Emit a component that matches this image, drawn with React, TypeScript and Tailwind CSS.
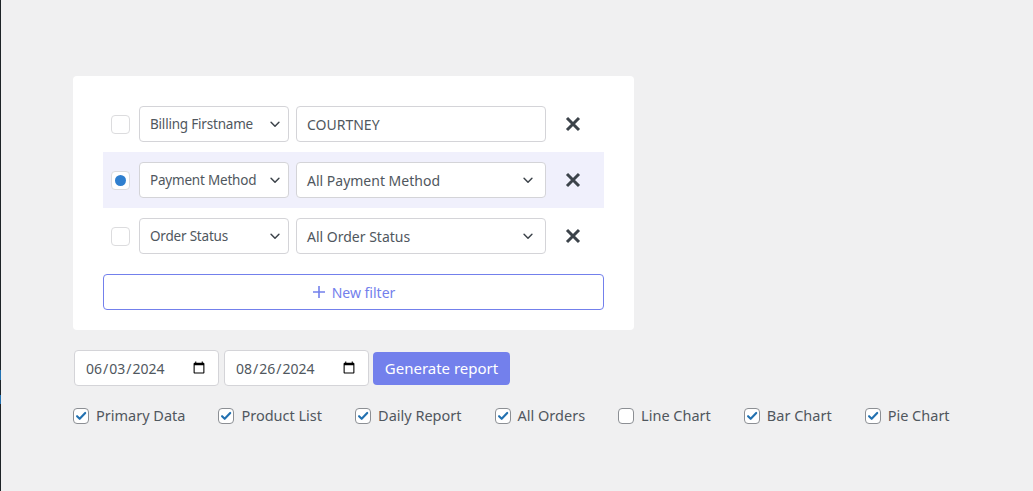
import { useState } from "react";

const FONT = { fontFamily: '"Noto Sans", "Open Sans", sans-serif' };

type Row = {
  field: string;
  value: string;
  kind: "text" | "select";
};

const ROWS: Row[] = [
  { field: "Billing Firstname", value: "COURTNEY", kind: "text" },
  { field: "Payment Method", value: "All Payment Method", kind: "select" },
  { field: "Order Status", value: "All Order Status", kind: "select" },
];

const OPTIONS = [
  { label: "Primary Data", on: true },
  { label: "Product List", on: true },
  { label: "Daily Report", on: true },
  { label: "All Orders", on: true },
  { label: "Line Chart", on: false },
  { label: "Bar Chart", on: true },
  { label: "Pie Chart", on: true },
];

function Chevron() {
  return (
    <svg viewBox="0 0 16 16" className="h-[14px] w-[14px] shrink-0" fill="none">
      <path
        d="M3.5 6l4.5 4.5L12.5 6"
        stroke="#3c434a"
        strokeWidth="1.7"
        strokeLinecap="round"
        strokeLinejoin="round"
      />
    </svg>
  );
}

function CloseIcon() {
  return (
    <svg viewBox="0 0 16 16" className="h-4 w-4" fill="none">
      <path d="M2 2l12 12M14 2L2 14" stroke="#3c434a" strokeWidth="3" />
    </svg>
  );
}

function Check({ on }: { on: boolean }) {
  return (
    <span className="flex h-4 w-4 shrink-0 items-center justify-center rounded-[4px] border border-[#8c8f94] bg-white">
      {on && (
        <svg viewBox="0 0 16 16" className="h-[14px] w-[14px]" fill="none">
          <path
            d="M3.5 8.2l3 3L12.8 4.5"
            stroke="#2271b1"
            strokeWidth="2.4"
            strokeLinecap="round"
            strokeLinejoin="round"
          />
        </svg>
      )}
    </span>
  );
}

export default function App() {
  const [active, setActive] = useState(1);
  const [opts, setOpts] = useState(OPTIONS);

  return (
    <div className="flex min-h-screen bg-[#f0f0f1] text-[#50575e]" style={FONT}>
      {/* admin sidebar edge */}
      <div className="flex w-px shrink-0 flex-col">
        <div className="h-[370px] bg-[#1d2327]" />
        <div className="h-[10px] bg-[#2271b1]" />
        <div className="h-[15px] bg-[#1d2327]" />
        <div className="h-[9px] bg-[#2271b1]" />
        <div className="flex-1 bg-[#1d2327]" />
      </div>

      <div className="flex flex-col pl-[72px] pt-[76px]">
        <div className="w-[561px] rounded-[4px] bg-white px-[30px] py-[20px]">
          {ROWS.map((row, i) => (
            <div
              key={row.field}
              onClick={() => setActive(i)}
              className={`flex h-[56px] items-center pl-2 ${
                active === i ? "bg-[#f0f0fc]" : ""
              }`}
            >
              <span className="flex h-[19px] w-[19px] shrink-0 items-center justify-center rounded-[4px] border border-[#dcdcde] bg-white">
                {active === i && (
                  <span className="h-[11px] w-[11px] rounded-full bg-[#2f7fcf]" />
                )}
              </span>
              <div className="ml-[9px] flex h-[36px] w-[150px] items-center justify-between rounded-[4px] border border-[#d4d4d8] bg-white pl-[10px] pr-[6px] text-[13.5px] tracking-[-0.2px]">
                <span className="whitespace-nowrap">{row.field}</span>
                <Chevron />
              </div>
              <div className="ml-[7px] flex h-[36px] w-[250px] items-center justify-between rounded-[4px] border border-[#d4d4d8] bg-white pl-[10px] pr-[10px] text-[14px]">
                <span className="whitespace-nowrap">{row.value}</span>
                {row.kind === "select" && <Chevron />}
              </div>
              <button className="ml-[19px] flex h-4 w-4 items-center justify-center">
                <CloseIcon />
              </button>
            </div>
          ))}

          <button className="mt-[10px] flex h-[36px] w-full items-center justify-center gap-1.5 rounded-[4px] border border-[#7380ec] bg-white text-[14px] text-[#7380ec]">
            <svg viewBox="0 0 14 14" className="h-[14px] w-[14px]" fill="none">
              <path d="M7 1v12M1 7h12" stroke="#7380ec" strokeWidth="1.6" />
            </svg>
            New filter
          </button>
        </div>

        <div className="ml-px mt-[20px] flex items-center">
          <input
            type="date"
            defaultValue="2024-06-03"
            className="h-[36px] w-[145px] rounded-[4px] border border-[#d4d4d8] bg-white px-[10px] text-[14px] text-[#50575e]"
            style={FONT}
          />
          <input
            type="date"
            defaultValue="2024-08-26"
            className="ml-[5px] h-[36px] w-[145px] rounded-[4px] border border-[#d4d4d8] bg-white px-[10px] text-[14px] text-[#50575e]"
            style={FONT}
          />
          <button className="ml-[4px] h-[33px] w-[137px] rounded-[4px] bg-[#7380ec] text-[15px] text-white">
            Generate report
          </button>
        </div>

        <div className="mt-[20px] flex h-[20px] items-center gap-[33px] text-[14.5px]">
          {opts.map((o, i) => (
            <label
              key={o.label}
              className="flex cursor-pointer items-center gap-[7px]"
              onClick={() =>
                setOpts((prev) =>
                  prev.map((p, j) => (j === i ? { ...p, on: !p.on } : p))
                )
              }
            >
              <Check on={o.on} />
              <span className="whitespace-nowrap">{o.label}</span>
            </label>
          ))}
        </div>
      </div>
    </div>
  );
}
